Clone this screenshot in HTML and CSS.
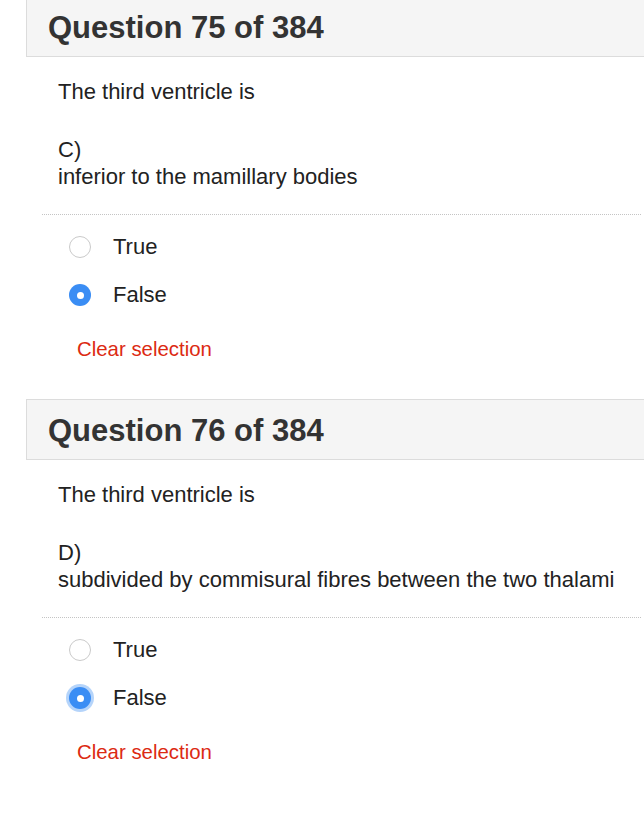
FILE: index.html
```html
<!DOCTYPE html>
<html>
<head>
<meta charset="utf-8">
<link rel="stylesheet" href="styles.css">
</head>
<body>
<div class="page">
  <section class="question first">
    <div class="q-header"><h2>Question 75 of 384</h2></div>
    <div class="q-body">
      <p class="stem">The third ventricle is</p>
      <p class="option">C)<br>inferior to the mamillary bodies</p>
      <div class="answers">
        <label class="answer"><input type="radio" name="q75"><span>True</span></label>
        <label class="answer"><input type="radio" name="q75" checked><span>False</span></label>
      </div>
      <a class="clear">Clear selection</a>
    </div>
  </section>
  <section class="question">
    <div class="q-header"><h2>Question 76 of 384</h2></div>
    <div class="q-body">
      <p class="stem">The third ventricle is</p>
      <p class="option">D)<br>subdivided by commisural fibres between the two thalami</p>
      <div class="answers">
        <label class="answer"><input type="radio" name="q76"><span>True</span></label>
        <label class="answer"><input type="radio" name="q76" class="focused" checked><span>False</span></label>
      </div>
      <a class="clear">Clear selection</a>
    </div>
  </section>
</div>
</body>
</html>
```
FILE: styles.css
```css
html, body {
  margin: 0;
  padding: 0;
  background: #fff;
  overflow: hidden;
}
body {
  font-family: "Liberation Sans", Arial, Helvetica, sans-serif;
  color: #222;
}
.page {
  padding-left: 26px;
}
.question {
  margin-bottom: 36px;
}
.question.first {
  margin-top: -4px;
}
.q-header {
  background: #f5f5f5;
  border: 1px solid #dcdcdc;
  border-right: none;
  height: 59px;
  box-sizing: content-box;
  padding-left: 21px;
  margin-right: -10px;
}
.q-header h2 {
  margin: 0;
  padding-top: 2px;
  font-size: 31px;
  line-height: 57px;
  font-weight: bold;
  color: #333;
}
.q-body {
  margin-left: 16px;
}
.stem, .option {
  margin: 0;
  padding-left: 16px;
  font-size: 22px;
  line-height: 27px;
  color: #222;
}
.stem {
  margin-top: 21px;
}
.option {
  margin-top: 31px;
  padding-bottom: 24px;
  border-bottom: 1px dotted #c4c4c4;
  margin-right: 3px;
}
.answers {
  padding-top: 8px;
  padding-left: 27px;
  display: flex;
  flex-direction: column;
}
.answer {
  display: flex;
  align-items: center;
  height: 48px;
  font-size: 22px;
  color: #222;
}
.answer input {
  appearance: none;
  -webkit-appearance: none;
  margin: 0 22px 0 0;
  width: 22px;
  height: 22px;
  border-radius: 50%;
  border: 1.5px solid #cacaca;
  background: #fff;
  box-sizing: border-box;
  flex: none;
  position: relative;
}
.answer input:checked {
  border: none;
  background: #3a8df4;
}
.answer input:checked::after {
  content: "";
  position: absolute;
  left: 7.5px;
  top: 7.5px;
  width: 7px;
  height: 7px;
  border-radius: 50%;
  background: #fff;
}
.answer input.focused {
  box-shadow: 0 0 0 3px rgba(90, 160, 245, 0.45);
}
.clear {
  display: block;
  margin-top: 17px;
  padding-left: 35px;
  font-size: 20.4px;
  line-height: 27px;
  color: #dc2a12;
}
```
